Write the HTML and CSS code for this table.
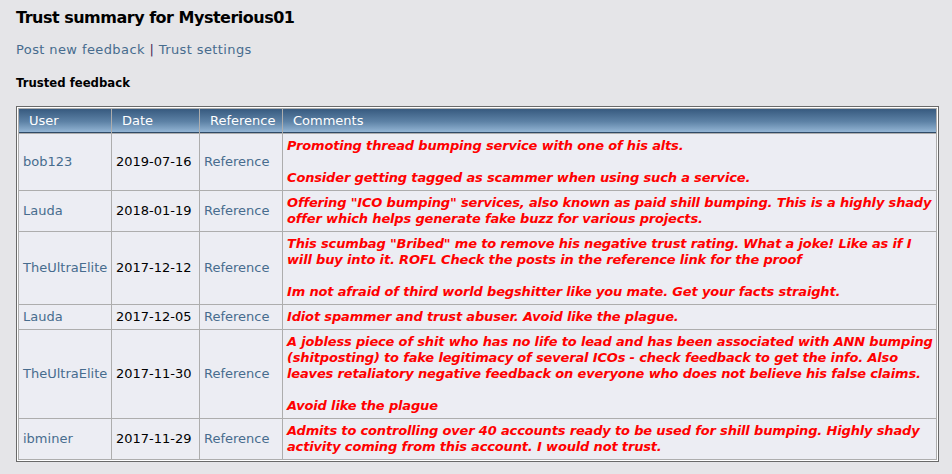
FILE: index.html
```html
<!DOCTYPE html>
<html>
<head>
	<title>Trust summary for Mysterious01</title>
	<link rel="stylesheet" href="styles.css">
</head>
<body>
	<h1 class="title">Trust summary for Mysterious01</h1>
	<p class="actions">
		<a href="#">Post new feedback</a> <span class="sep">|</span> <a href="#">Trust settings</a>
	</p>
	<p class="section">Trusted feedback</p>

	<div class="tborder">
		<table class="bordercolor">
			<thead>
				<tr>
					<th class="c-user">User</th>
					<th class="c-date">Date</th>
					<th class="c-ref">Reference</th>
					<th>Comments</th>
				</tr>
			</thead>
			<tbody>
				<tr>
					<td><a href="#">bob123</a></td>
					<td>2019-07-16</td>
					<td><a href="#">Reference</a></td>
					<td class="comment">Promoting thread bumping service with one of his alts.<br><br>Consider getting tagged as scammer when using such a service.</td>
				</tr>
				<tr>
					<td><a href="#">Lauda</a></td>
					<td>2018-01-19</td>
					<td><a href="#">Reference</a></td>
					<td class="comment">Offering "ICO bumping" services, also known as paid shill bumping. This is a highly shady<br>offer which helps generate fake buzz for various projects.</td>
				</tr>
				<tr>
					<td><a href="#">TheUltraElite</a></td>
					<td>2017-12-12</td>
					<td><a href="#">Reference</a></td>
					<td class="comment">This scumbag "Bribed" me to remove his negative trust rating. What a joke! Like as if I<br>will buy into it. ROFL Check the posts in the reference link for the proof<br><br>Im not afraid of third world begshitter like you mate. Get your facts straight.</td>
				</tr>
				<tr>
					<td><a href="#">Lauda</a></td>
					<td>2017-12-05</td>
					<td><a href="#">Reference</a></td>
					<td class="comment single">Idiot spammer and trust abuser. Avoid like the plague.</td>
				</tr>
				<tr>
					<td><a href="#">TheUltraElite</a></td>
					<td>2017-11-30</td>
					<td><a href="#">Reference</a></td>
					<td class="comment">A jobless piece of shit who has no life to lead and has been associated with ANN bumping<br>(shitposting) to fake legitimacy of several ICOs - check feedback to get the info. Also<br>leaves retaliatory negative feedback on everyone who does not believe his false claims.<br><br>Avoid like the plague</td>
				</tr>
				<tr>
					<td><a href="#">ibminer</a></td>
					<td>2017-11-29</td>
					<td><a href="#">Reference</a></td>
					<td class="comment">Admits to controlling over 40 accounts ready to be used for shill bumping. Highly shady<br>activity coming from this account. I would not trust.</td>
				</tr>
			</tbody>
		</table>
	</div>
</body>
</html>
```

FILE: styles.css
```css
body {
	margin: 0;
	padding: 8px 13px 0 16px;
	background-color: #e5e5e8;
	color: #000;
	font-family: "DejaVu Sans", Verdana, sans-serif;
	font-size: 13px;
}

a {
	color: #476c8e;
	text-decoration: none;
}

.title {
	margin: 0;
	font-size: 16px;
	line-height: 20px;
	font-weight: bold;
	letter-spacing: -0.5px;
}

.actions {
	margin: 14px 0 0 0;
	line-height: 16px;
	letter-spacing: 0.4px;
}

.sep {
	color: #4b2d57;
}

.section {
	margin: 18px 0 0 0;
	font-size: 11.7px;
	font-weight: bold;
	line-height: 14px;
}

.tborder {
	margin-top: 16px;
	width: 919px;
	padding: 1px;
	border: 1px solid #696969;
	background-color: #fff;
}

.bordercolor {
	width: 919px;
	table-layout: fixed;
	border-collapse: separate;
	border-spacing: 1px;
	background-color: #adadad;
}

.bordercolor th,
.bordercolor td {
	padding: 4px;
	line-height: 16px;
	text-align: left;
	vertical-align: middle;
	white-space: nowrap;
}

.bordercolor th {
	color: #fff;
	font-weight: normal;
	padding-left: 10px;
	line-height: 15px;
	background: linear-gradient(#375a7f, #5d82a6 55%, #93b5d4);
	border-bottom: 1px solid #2f4a66;
}

.bordercolor td {
	background-color: #ecedf3;
}

.c-user { width: 78px; }
.c-date { width: 73px; }
.c-ref { width: 68px; }

.comment {
	color: #ff0000;
	font-weight: bold;
	font-style: italic;
	letter-spacing: -0.16px;
}

.single {
	line-height: 15px;
}
```
